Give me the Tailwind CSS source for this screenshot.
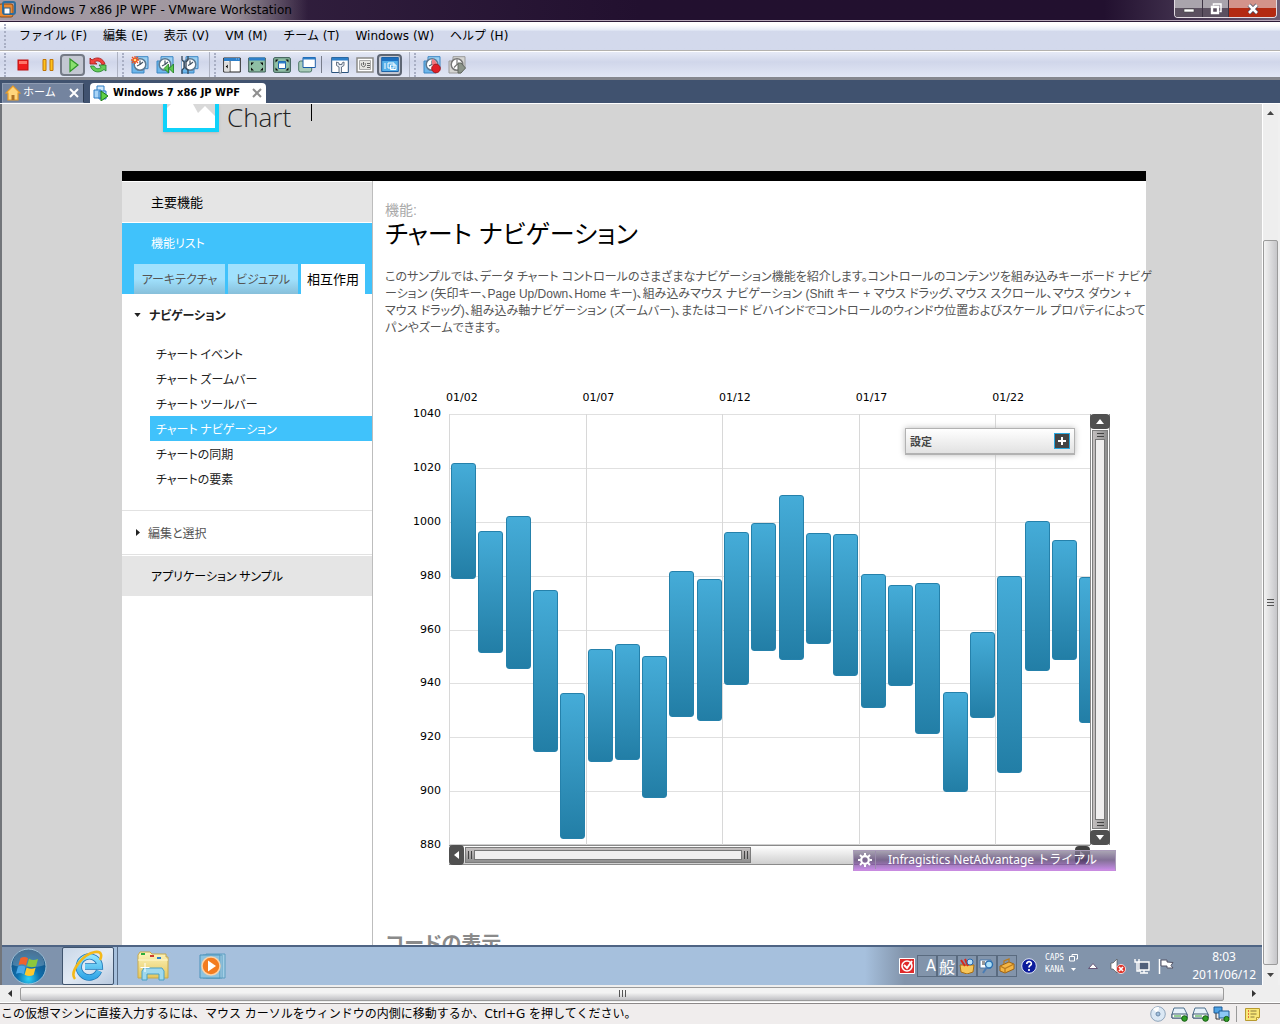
<!DOCTYPE html>
<html lang="ja">
<head>
<meta charset="utf-8">
<title>Windows 7 x86 JP WPF - VMware Workstation</title>
<script src="https://cdn.jsdelivr.net/npm/@tailwindcss/browser@4"></script>
</head>
<body class="h-screen flex flex-col overflow-hidden bg-[#f0eded] text-black text-xs font-['DejaVu_Sans','Noto_Sans_CJK_JP',sans-serif]">

<!-- Shared icon parts -->
<svg class="absolute w-0 h-0" aria-hidden="true">
  <defs>
    <radialGradient id="orb" cx=".5" cy=".85" r=".8"><stop offset="0" stop-color="#2fd4f8"/><stop offset=".4" stop-color="#0d6fae"/><stop offset="1" stop-color="#174a76"/></radialGradient>
    <linearGradient id="ie" x1="0" y1="0" x2="0" y2="1"><stop offset="0" stop-color="#8fe4fc"/><stop offset="1" stop-color="#35a8e8"/></linearGradient>
    <linearGradient id="fold" x1="0" y1="0" x2="0" y2="1"><stop offset="0" stop-color="#fdf6c0"/><stop offset="1" stop-color="#e5c65c"/></linearGradient>
    <symbol id="clock" viewBox="0 0 18 18"><path d="M5 .7h12v12H5z" fill="#9bd0f3" stroke="#3a86c4"/><path d="M1 5h12v12H1z" fill="#6db6ea" stroke="#3a86c4"/><circle cx="9" cy="8.500" r="5.800" fill="#fff" stroke="#5c7890" stroke-width="1.500"/><path d="M9 4.500v4l-3 1.500M9 8.500l3-2.500" fill="none" stroke="#456" stroke-width="1.200"/></symbol>
    <symbol id="clockg" viewBox="0 0 18 18"><path d="M5 .7h12v12H5zM1 5h12v12H1z" fill="#d5d5d3" stroke="#999"/><circle cx="9" cy="8.500" r="5.800" fill="#fff" stroke="#777" stroke-width="1.500"/><path d="M9 3.500v5l-3 3M9 8.500h3" fill="none" stroke="#777" stroke-width="1.200"/></symbol>
    <symbol id="drive" viewBox="0 0 17 16"><path d="M3 2h10l3 6v4H1V8z" fill="#e7f2fa" stroke="#4d6f8c"/><path d="M1 8h15v4H1z" fill="#fff" stroke="#36546e"/><path d="M3 10h7" stroke="#2ca02c"/><circle cx="13.500" cy="12.500" r="2.800" fill="#2f9e26" stroke="#145c10"/></symbol>
  </defs>
</svg>

<header class="shrink-0">
  <!-- Title bar -->
  <div class="h-[21px] flex items-start justify-between bg-linear-to-r from-[#3c2a48] via-[#22102f] via-50% to-[#22102f] border-b border-[#b8a9ba]">
    <div class="flex items-center h-5 pr-4 bg-linear-to-r from-[#a39aa4] via-[#a0979f] via-75% to-[#3c2a48]/0 whitespace-nowrap">
      <svg class="w-[17px] h-[18px] mr-1" viewBox="0 0 17 18"><rect x="-1" y="3" width="14" height="13" rx="2" fill="#e98a33" stroke="#8c4b15"/><rect x="3" y="1" width="12" height="12" rx="2" fill="none" stroke="#2f6d9c" stroke-width="2"/><rect x="4" y="7" width="6" height="6" fill="#fff" stroke="#2b5f8a"/></svg>
      <h1 class="text-xs">Windows 7 x86 JP WPF - VMware Workstation</h1>
    </div>
    <div class="h-5 pl-[70px] pr-[3px] bg-linear-to-r from-[#22102f] to-[#6b5d75] shrink-0">
      <div class="flex h-[18px] rounded-b border border-t-0 border-[#e2dbe2] overflow-hidden">
        <button aria-label="Minimize" class="w-7 flex items-center justify-center bg-linear-to-b from-[#a9a4ac] from-50% to-[#5b5060] to-50% border-r border-[#3c3343]"><svg class="w-3 h-3" viewBox="0 0 12 12"><path d="M1 6h10v3H1z" fill="#fff" stroke="#444" stroke-width=".6"/></svg></button>
        <button aria-label="Restore" class="w-[26px] flex items-center justify-center bg-linear-to-b from-[#a9a4ac] from-50% to-[#5b5060] to-50% border-r border-[#3c3343]"><svg class="w-3 h-3" viewBox="0 0 12 12"><path d="M3.500 2.500V1h7.500v7.500H9.500" fill="none" stroke="#fff" stroke-width="1.500"/><path d="M2 4h6v6H2z" fill="none" stroke="#fff" stroke-width="2.400"/></svg></button>
        <button aria-label="Close" class="w-[47px] flex items-center justify-center bg-linear-to-b from-[#d3938a] from-50% to-[#b32a12] to-50%"><svg class="w-3 h-3" viewBox="0 0 12 12"><path d="M2 2l8 8M10 2l-8 8" stroke="#444a60" stroke-width="4"/><path d="M2 2l8 8M10 2l-8 8" stroke="#fff" stroke-width="2.600"/></svg></button>
      </div>
    </div>
  </div>
  <!-- Menu -->
  <nav class="h-[30px] flex items-center gap-4 pl-1 bg-linear-to-b from-white from-10% via-[#e4eaf6] via-30% to-[#d3d9ec] to-31% border-t border-t-[#2a1a36] border-b border-b-[#b4b2ae] whitespace-nowrap">
    <span class="w-0 h-6 border-l-2 border-dotted border-[#a9afc4] -mr-[3px]"></span>
    <a href="#">ファイル (F)</a><a href="#">編集 (E)</a><a href="#">表示 (V)</a><a href="#">VM (M)</a><a href="#">チーム (T)</a><a href="#">Windows (W)</a><a href="#">ヘルプ (H)</a>
  </nav>
  <!-- Toolbar -->
  <div class="h-[29px] flex items-center bg-linear-to-b from-[#e6eaf6] via-[#d0d6ea] via-40% to-[#e2e7f5] border-t border-white border-b-3 border-b-[#85878e]">
    <span class="w-1 h-full"></span><span class="w-[6px] h-6 border-l-2 border-dotted border-[#a9afc4]"></span>
    <button aria-label="Power off" class="w-[25px] h-6 flex items-center justify-center"><svg class="w-[18px] h-[18px]" viewBox="0 0 18 18"><rect x="4" y="4" width="10" height="10" fill="#f01c1c" stroke="#b11"/><path d="M5 5h8v3H5z" fill="#ff7468"/></svg></button>
    <button aria-label="Suspend" class="w-[25px] h-6 flex items-center justify-center"><svg class="w-[18px] h-[18px]" viewBox="0 0 18 18"><path d="M4 3.500h3v11H4zM11 3.500h3v11h-3z" fill="#ffc21c" stroke="#c07405"/></svg></button>
    <button aria-label="Power on" class="w-[25px] h-[22px] flex items-center justify-center rounded border-2 border-[#747a86] bg-[#c3c7d2]"><svg class="w-[18px] h-[18px]" viewBox="0 0 18 18"><path d="M6 3l8 6-8 6.500z" fill="#8ae06e" stroke="#2f9428" stroke-width="1.200"/></svg></button>
    <button aria-label="Reset" class="w-[25px] h-6 flex items-center justify-center"><svg class="w-[18px] h-[18px]" viewBox="0 0 18 18"><path d="M1 8V2l2 2c5-4 11-2 13 4l-3 1C12 5 8 4 5.500 6L8 8z" fill="#f0413c" stroke="#a51414" stroke-width=".8"/><path d="M17 9v6l-2-1.500C10 18 3 16 1.500 10H5c1.500 3 4.500 3.500 7 1.500L10 9z" fill="#64cc58" stroke="#21812a" stroke-width=".8"/></svg></button>
    <span class="w-2 h-full border-r border-[#aeb3c3]"></span><span class="w-[9px] h-6 flex justify-center"><i class="w-0 border-l-2 border-dotted border-[#a9afc4]"></i></span>
    <button aria-label="Take snapshot" class="w-[25px] h-6 flex items-center justify-center"><svg class="w-[18px] h-[18px]" viewBox="0 0 18 18"><use href="#clock"/><path d="M4 0v8M0 4h8M1 1l6 6M7 1L1 7" stroke="#f0501c" stroke-width="1.300"/><circle cx="4" cy="4" r="1.300" fill="#ffe27a"/></svg></button>
    <button aria-label="Revert snapshot" class="w-[25px] h-6 flex items-center justify-center"><svg class="w-[18px] h-[18px]" viewBox="0 0 18 18"><use href="#clock"/><path d="M12.500 8v9L8 12.500zM17.500 8v9L13 12.500z" fill="#5cc850" stroke="#1c7c1c" stroke-width=".8"/></svg></button>
    <button aria-label="Manage snapshots" class="w-[25px] h-6 flex items-center justify-center"><svg class="w-[18px] h-[18px]" viewBox="0 0 18 18"><use href="#clock"/><path d="M1 0v4l2 2v6l-2 2v4M7 0v4L5 6v6l2 2v4" fill="#f5f7fa" stroke="#34465a" stroke-width="1.300"/></svg></button>
    <span class="w-2 h-full border-r border-[#aeb3c3]"></span><span class="w-[9px] h-6 flex justify-center"><i class="w-0 border-l-2 border-dotted border-[#a9afc4]"></i></span>
    <button aria-label="Sidebar" class="w-[25px] h-6 flex items-center justify-center"><svg class="w-[18px] h-[18px]" viewBox="0 0 18 18"><path d="M.7 2h16.600v14H.7z" fill="#fff" stroke="#222"/><path d="M1 2h16v3H1z" fill="#2d7fc9"/><path d="M7 5v11" stroke="#333"/><path d="M1.500 5.500h5v10h-5z" fill="#dcdcdc"/><path d="M5 8v5L2.500 10.500zM13 3h1M15 3h1" fill="#000" stroke="#fff" stroke-width=".5"/></svg></button>
    <button aria-label="Fit guest" class="w-[25px] h-6 flex items-center justify-center"><svg class="w-[18px] h-[18px]" viewBox="0 0 18 18"><path d="M.7 2h16.600v14H.7z" fill="#8fbfa5" stroke="#3a5a52"/><path d="M1 1.500h16v3H1z" fill="#2d7fc9"/><path d="M3 6.500h3l-3 3zM15 6.500h-3l3 3zM3 14.500h3l-3-3zM15 14.500h-3l3-3z" fill="#0a0a0a"/></svg></button>
    <button aria-label="Full screen" class="w-[25px] h-6 flex items-center justify-center"><svg class="w-[18px] h-[18px]" viewBox="0 0 18 18"><rect x=".7" y="1.700" width="16.600" height="14.600" rx="1" fill="#8fbfa5" stroke="#2d5148"/><path d="M2.500 3.500h3l-3 3zM15.500 3.500h-3l3 3zM2.500 14.500h3l-3-3zM15.500 14.500h-3l3-3z" fill="#0a0a0a"/><path d="M5.500 5.500h7v7h-7z" fill="#fff" stroke="#1f64aa"/><path d="M5.500 5.500h7v2h-7z" fill="#2d7fc9"/></svg></button>
    <button aria-label="Unity" class="w-[25px] h-6 flex items-center justify-center"><svg class="w-[18px] h-[18px]" viewBox="0 0 18 18"><rect x=".7" y="5" width="13" height="11" rx="2" fill="#a9cdb9" stroke="#4d7767"/><path d="M5 1.500h12.300v10H5z" fill="#fff" stroke="#1d5ea8"/><path d="M5 1.500h12.300v2H5z" fill="#2d7fc9"/></svg></button>
    <span class="w-2 h-full py-1 flex justify-center"><i class="w-px bg-[#777c8a] -ml-1"></i></span>
    <button aria-label="Settings" class="w-[25px] h-6 flex items-center justify-center"><svg class="w-[18px] h-[18px]" viewBox="0 0 18 18"><path d="M.7 1.500h16.600v15H.7z" fill="#fff" stroke="#28527c"/><path d="M1 1.500h16v3H1z" fill="#2d7fc9"/><path d="M5.500 6v3.500L8 11v6h2.500v-6L13 9.500V6l-2 1v1.500H8V7z" fill="#e6ebf2" stroke="#5a6a7c" stroke-width=".9"/></svg></button>
    <button aria-label="Summary" class="w-[25px] h-6 flex items-center justify-center"><svg class="w-[18px] h-[18px]" viewBox="0 0 18 18"><path d="M1 2h16v14H1z" fill="#fff" stroke="#8b8b88" stroke-width="1.500"/><path d="M3.500 4.500h11v9h-11z" fill="#e4e4e0" stroke="#aaa"/><path d="M6 7c-2 3 2 5 3 3s0-3 0-3M7.500 6v3M11 7.500h3M11 9.500h3M11 11.500h3" fill="none" stroke="#666"/></svg></button>
    <button aria-label="Console view" class="w-[25px] h-[22px] flex items-center justify-center rounded border-2 border-[#5e6674] bg-[#c3c7d2]"><svg class="w-[18px] h-[18px]" viewBox="0 0 18 18"><path d="M.7 1.500h16.600v14H.7z" fill="#55b0ea" stroke="#1d62a6"/><path d="M1 2h16v3H1z" fill="#1c6fc0"/><path d="M7 7h6v5H7zM9.500 9H15v4.500H9.500z" fill="#55b0ea" stroke="#fff"/><path d="M3 8h2M3 10h2M3 12h2" stroke="#fff"/></svg></button>
    <span class="w-2 h-full border-r border-[#aeb3c3]"></span><span class="w-[9px] h-6 flex justify-center"><i class="w-0 border-l-2 border-dotted border-[#a9afc4]"></i></span>
    <button aria-label="Record" class="w-[25px] h-6 flex items-center justify-center"><svg class="w-[18px] h-[18px]" viewBox="0 0 18 18"><use href="#clock"/><path d="M9 3a6 6 0 015 7L9 8.500z" fill="#f07a80"/><circle cx="13" cy="12.500" r="4.300" fill="#e11f26" stroke="#a3191c"/></svg></button>
    <button aria-label="Replay" class="w-[25px] h-6 flex items-center justify-center"><svg class="w-[18px] h-[18px]" viewBox="0 0 18 18"><use href="#clockg"/><path d="M10 7h3l4.500 5-4.500 5h-3z" fill="#8c948a" stroke="#60665f"/></svg></button>
  </div>
  <!-- Tabs -->
  <div class="h-6 flex items-end gap-[6px] bg-[#40526f] pl-[2px] border-b border-white whitespace-nowrap">
    <a href="#" class="h-5 w-[82px] flex items-center pl-[2px] pr-1 text-white bg-[#74849f] border border-[#8f9cb2] border-r-[#2a384e]">
      <svg class="w-4 h-4 mr-[2px] shrink-0" viewBox="0 0 16 16"><path d="M8 1L1 8h2v7h10V8h2z" fill="#ffd57c" stroke="#e89b26" stroke-width="1.200"/><path d="M6.500 10h3v5h-3z" fill="#b07325"/></svg>
      <span class="text-[11px]">ホーム</span><span class="ml-auto"><svg class="w-[10px] h-[10px]" viewBox="0 0 10 10"><path d="M1 1l8 8M9 1L1 9" stroke="#fff" stroke-width="2"/></svg></span>
    </a>
    <a href="#" class="h-5 w-[176px] flex items-center pl-[3px] pr-1 bg-white rounded-t-sm font-bold font-['DejaVu_Sans_Condensed','DejaVu_Sans',sans-serif]">
      <svg class="w-4 h-4 mr-1 shrink-0" viewBox="0 0 16 16"><path d="M4 1h7v7H4z" fill="#cfe8fb" stroke="#2c7cc4"/><path d="M1 5h7v8H1zM6 6h7v8H6z" fill="#a9d5f7" stroke="#2c7cc4"/><path d="M8 6l7 5-7 5z" fill="#5fd146" stroke="#1f7a1a"/></svg>
      <span class="text-[11px]">Windows 7 x86 JP WPF</span><span class="ml-auto"><svg class="w-[10px] h-[10px]" viewBox="0 0 10 10"><path d="M1 1l8 8M9 1L1 9" stroke="#8f8f8f" stroke-width="2"/></svg></span>
    </a>
  </div>
</header>

<!-- Guest display -->
<section class="flex-1 min-h-0 flex border-x-2 border-l-[#72757a] border-r-[#f0f0f0]">
  <div class="flex-1 min-w-0 flex flex-col">
    <main class="flex-1 min-h-0 overflow-hidden bg-[#d4d4d4] pl-1 text-[#222]">
      <div class="w-[1024px] mx-auto [font-feature-settings:'palt','kern']">
        <div class="h-[67px] flex items-start pl-[41px]">
          <div class="w-14 h-7 bg-white border-4 border-t-0 border-[#0fd2fa] shadow"><svg class="w-full h-3" viewBox="0 0 48 12" preserveAspectRatio="none"><path d="M0 0h4L0 4zM26 0h22v12L38 2l-7 7z" fill="#d9d9d9"/></svg></div>
          <span class="ml-2 -mt-[5px] text-[26px] leading-9 text-[#222] font-light font-['Open_Sans',sans-serif]">Chart</span>
          <i class="ml-5 w-px h-[17px] bg-black"></i>
        </div>
        <div class="h-[10px] bg-black"></div>
        <div class="flex bg-white">
          <aside class="w-[251px] shrink-0 border-r border-[#bdbdbd] pt-px text-xs whitespace-nowrap font-['Noto_Sans_CJK_JP',sans-serif]">
            <a href="#" class="h-[41px] flex items-center pl-[29px] bg-[#e5e5e5] border-b border-white text-[13px] text-black">主要機能</a>
            <div class="bg-[#40c2fb] h-[71px] flex flex-col justify-between">
              <a href="#" class="h-10 flex items-center pl-[29px] text-white">機能リスト</a>
              <div class="flex gap-[3px] pl-3 text-[#555]">
                <a href="#" class="w-[91px] h-[30px] flex items-center justify-center bg-linear-to-b from-[#a0e1fd] from-50% to-[#87bfda]">アーキテクチャ</a>
                <a href="#" class="w-[70px] h-[30px] flex items-center justify-center bg-linear-to-b from-[#a0e1fd] from-50% to-[#87bfda]">ビジュアル</a>
                <a href="#" class="w-16 h-[30px] flex items-center justify-center bg-white text-[13px] text-black">相互作用</a>
              </div>
            </div>
            <a href="#" class="h-[42px] flex items-center gap-2 pl-3 font-bold"><svg class="w-[7px] h-1" viewBox="0 0 8 5"><path d="M0 0h8L4 5z" fill="#222"/></svg>ナビゲーション</a>
            <ul class="pl-7 pt-[5px] pb-[19px] leading-[25px]">
              <li class="pl-[6px]"><a href="#">チャート イベント</a></li>
              <li class="pl-[6px]"><a href="#">チャート ズームバー</a></li>
              <li class="pl-[6px]"><a href="#">チャート ツールバー</a></li>
              <li class="pl-[6px] bg-[#40c2fb] text-white"><a href="#">チャート ナビゲーション</a></li>
              <li class="pl-[6px]"><a href="#">チャートの同期</a></li>
              <li class="pl-[6px]"><a href="#">チャートの要素</a></li>
            </ul>
            <a href="#" class="h-[45px] flex items-center gap-2 pl-[14px] border-y border-[#e2e2e2] text-[#555]"><svg class="w-1 h-[7px]" viewBox="0 0 4 7"><path d="M0 0l4 3.500L0 7z" fill="#222"/></svg>編集と選択</a>
            <a href="#" class="mt-px h-10 flex items-center pl-[29px] bg-[#e5e5e5] text-black">アプリケーション サンプル</a>
          </aside>

          <article class="flex-1 min-w-0 pl-3 pt-5 font-['Liberation_Sans','Noto_Sans_CJK_JP',sans-serif] whitespace-nowrap">
            <p class="text-sm leading-[18px] text-[#aaa]">機能:</p>
            <h2 class="text-[25px] leading-[30px] text-black">チャート ナビゲーション</h2>
            <p class="mt-5 text-xs leading-[17px] text-[#555]">このサンプルでは、データ チャート コントロールのさまざまなナビゲーション機能を紹介します。コントロールのコンテンツを組み込みキーボード ナビゲ<br>ーション (矢印キー、Page Up/Down、Home キー)、組み込みマウス ナビゲーション (Shift キー + マウス ドラッグ、マウス スクロール、マウス ダウン +<br>マウス ドラッグ)、組み込み軸ナビゲーション (ズームバー)、またはコード ビハインドでコントロールのウィンドウ位置およびスケール プロパティによって<br>パンやズームできます。</p>

            <figure class="mt-[54px] mr-9 grid grid-cols-[64px_1fr_20px] text-[11px] leading-[14px] text-black font-['DejaVu_Sans',sans-serif]">
              <div id="dates" class="col-start-2 relative h-[23px]"></div>
              <div id="levels" class="col-start-1 row-start-2 relative"></div>
              <div class="row-start-2 relative h-[431px] border-l border-t border-b border-[#cfcfcf]">
                <div id="plot" class="absolute -inset-px right-0 overflow-hidden"></div>
                <div class="absolute top-[13px] right-[15px] w-[170px] h-[27px] flex items-center justify-between px-1 border border-b-2 border-[#b2b2b2] bg-linear-to-b from-white to-[#e2e2e2] shadow-[0_0_6px_#bbb] font-bold text-[#444] font-['Noto_Sans_CJK_JP',sans-serif]">設定
                  <button aria-label="設定を開く" class="w-4 h-4 bg-[#444] border border-[#29a8e0] flex items-center justify-center"><svg class="w-[10px] h-[10px]" viewBox="0 0 10 10"><path d="M5 1v8M1 5h8" stroke="#fff" stroke-width="2"/></svg></button>
                </div>
              </div>
              <!-- Vertical zoom bar -->
              <div class="row-start-2 flex flex-col border-x border-[#8a8a8a] bg-white">
                <button aria-label="上へ" class="h-[15px] -mx-px rounded bg-[#505050] flex items-center justify-center"><svg class="w-2 h-[5px]" viewBox="0 0 8 5"><path d="M4 0l4 5H0z" fill="#fff"/></svg></button>
                <div class="flex-1 my-px mx-px flex flex-col items-center justify-between border border-[#7c7c7c] bg-linear-to-r from-[#c4c0c0] to-[#8f8f8f]">
                  <i class="w-[7px] h-1 my-[2px] border-y border-[#444]"></i><i class="w-[10px] flex-1 border border-[#777] bg-[#f0efef]"></i><i class="w-[7px] h-1 my-[2px] border-y border-[#444]"></i>
                </div>
                <button aria-label="下へ" class="h-[15px] -mx-px rounded bg-[#505050] flex items-center justify-center"><svg class="w-2 h-[5px]" viewBox="0 0 8 5"><path d="M0 0h8L4 5z" fill="#fff"/></svg></button>
              </div>
              <!-- Horizontal zoom bar -->
              <div class="col-start-2 row-start-3 h-5 flex border-y border-[#8a8a8a] bg-linear-to-b from-white to-[#cfcfcf]">
                <button aria-label="左へ" class="w-[15px] -my-px rounded bg-[#505050] flex items-center justify-center"><svg class="w-[5px] h-2" viewBox="0 0 5 8"><path d="M5 0v8L0 4z" fill="#fff"/></svg></button>
                <div class="w-[286px] my-px ml-px flex items-center border border-[#7c7c7c] bg-linear-to-b from-[#c4c0c0] to-[#8f8f8f]">
                  <i class="w-1 h-2 mx-[2px] border-x border-[#444]"></i><i class="flex-1 h-[10px] border border-[#777] bg-[#f0efef]"></i><i class="w-1 h-2 mx-[2px] border-x border-[#444]"></i>
                </div>
                <div class="ml-auto relative">
                  <button aria-label="右へ" class="w-[15px] h-full rounded bg-[#404040] flex items-center justify-center"><svg class="w-[5px] h-2" viewBox="0 0 5 8"><path d="M0 0v8l5-4z" fill="#fff"/></svg></button>
                  <div class="absolute top-1 -right-[26px] w-[263px] h-[21px] flex items-center border border-[#a99bb8] border-b-2 border-b-[#c88be0] bg-linear-to-b from-[#8d869a]/75 via-[#5a4174]/75 via-50% to-[#b06ad8]/80 text-white text-xs font-['Noto_Sans','Noto_Sans_CJK_JP',sans-serif] [font-feature-settings:normal]">
                    <span class="w-[22px] h-full flex items-center justify-center border-r border-[#9c8cae]"><svg class="w-[14px] h-[14px]" viewBox="0 0 14 14"><circle cx="7" cy="7" r="3.800" fill="none" stroke="#fff" stroke-width="2.200"/><path d="M7 0v2.500M7 11.500V14M0 7h2.500M11.500 7H14M2 2l1.900 1.900M10.100 10.100L12 12M12 2l-1.900 1.900M3.900 10.100L2 12" stroke="#fff" stroke-width="2"/></svg></span>
                    <span class="ml-3">Infragistics NetAdvantage トライアル</span>
                  </div>
                </div>
              </div>
            </figure>
            <h3 class="mt-[65px] text-xl leading-7 font-bold text-[#8a8a8a] pb-10">コードの表示</h3>
          </article>
        </div>
      </div>
    </main>

    <!-- Guest taskbar -->
    <footer class="h-10 shrink-0 flex items-center border-t-2 border-[#4e6484] bg-linear-to-r from-[#7f93ad] from-5% via-[#a6c0dd] via-9% to-[#a6c0dd] whitespace-nowrap">
      <button aria-label="スタート" class="ml-2 w-[37px] h-[37px]"><svg viewBox="0 0 37 37"><circle cx="18.500" cy="18.500" r="17.500" fill="url(#orb)" stroke="#9cc0d8"/><path d="M2.500 17a16 16 0 0132 0c-8 3-24 3-32 0z" fill="#fff" opacity=".22"/><path d="M10.500 10c3-1.500 5-1.500 7.500.3L16 17.500c-2.500-1.500-5-1.500-7.500-.4z" fill="#f0622d"/><path d="M19 10.800c3 1.600 5.500 1.600 9 .2l-2 7.200c-3 1.300-6 1.300-9-.2z" fill="#8cc83c"/><path d="M8 18.600c3-1.200 5-1 7.600.4l-2 7.200c-2.600-1.600-5-1.600-7.600-.4z" fill="#4aa8e8"/><path d="M16.600 19.500c3 1.500 6 1.500 9 .3l-2 7.200c-3 1.300-6 1.300-9-.3z" fill="#fdc82e"/></svg></button>
      <button aria-label="Internet Explorer" class="ml-[15px] w-[52px] h-[38px] flex items-center justify-center rounded-xs border border-[#3f546e] bg-linear-to-br from-[#c9d7e8] via-[#e2eaf4] to-[#b9cadf]"><svg class="w-[34px] h-8" viewBox="0 0 34 32"><path d="M28 21a10.500 10.500 0 11.800-4.500H14" fill="none" stroke="#1f78b8" stroke-width="6.400"/><path d="M28 21a10.500 10.500 0 11.800-4.500H14" fill="none" stroke="url(#ie)" stroke-width="4.800"/><path d="M4 29C-2 22 12 4 24 2c7-1 7 4 5 8" fill="none" stroke="#f4b91a" stroke-width="2.600"/></svg></button>
      <i class="w-1 h-[38px] border-r border-[#566b86]"></i>
      <button aria-label="エクスプローラー" class="ml-[18px] w-[34px] h-[34px]"><svg viewBox="0 0 34 34"><path d="M2 6l2-3h10l2 2h14v3h2v21H2z" fill="url(#fold)" stroke="#c9a94a"/><path d="M5 4h4v2H5z" fill="#2cae3c"/><path d="M14 6h4v2h-4z" fill="#cf3b2f"/><path d="M21 8h4v2h-4z" fill="#2f80cc"/><path d="M2 11h30" stroke="#fff8cf"/><path d="M6 31v-9l2-3h18l2 3v9h-5v-6H11v6z" fill="#9fd9ee" stroke="#4ba0c4"/><path d="M9 14v9M4.500 18.500h9" stroke="#fff"/></svg></button>
      <button aria-label="メディア プレーヤー" class="ml-7 w-[34px] h-[34px]"><svg viewBox="0 0 34 34"><path d="M8 5h19v24H8z" fill="#a3cfe6" stroke="#5c9dc0"/><path d="M5 6h19v23H5z" fill="#b9dcee" stroke="#5c9dc0"/><path d="M2 6h20v23H2z" fill="#8cc3e0" stroke="#4d93ba"/><circle cx="13" cy="17" r="9" fill="#f37c20" stroke="#fbd2a8" stroke-width="1.500"/><path d="M10 11.500v11l8-5.500z" fill="#fff"/></svg></button>
      <div class="ml-auto h-full pl-[34px] pr-[6px] flex items-center bg-linear-to-r from-[#a6c0dd] to-[#8294ab] to-10% text-white">
        <svg class="w-4 h-4" viewBox="0 0 16 16"><path d="M.5.500h15v15H.5z" fill="#e02a2a" stroke="#fff"/><circle cx="8" cy="8" r="5" fill="none" stroke="#fff" stroke-width="1.600"/><path d="M5 7l3 3 5-7" fill="none" stroke="#fff" stroke-width="2"/></svg>
        <div class="ml-[2px] flex">
          <button class="w-5 h-[22px] border border-[#5a6b80] text-base leading-5 text-right font-['Liberation_Sans_Narrow','DejaVu_Sans_Condensed',sans-serif]">A</button>
          <button class="w-5 h-[22px] border border-[#5a6b80] text-base leading-5 font-['Noto_Sans_CJK_JP',sans-serif]">般</button>
          <button aria-label="IMEパッド" class="w-5 h-[22px] border border-[#5a6b80] flex items-center justify-center"><svg class="w-4 h-4" viewBox="0 0 16 16"><path d="M1 7h14l-1 7-6 2-6-2z" fill="#f6c65a" stroke="#a86e14"/><path d="M2 2l4 6M6 1l3 7" stroke="#d6281f" stroke-width="2"/><circle cx="11" cy="4" r="3" fill="#b8e0f8" stroke="#2768b0"/></svg></button>
          <button aria-label="辞書" class="w-5 h-[22px] border border-[#5a6b80] flex items-center justify-center"><svg class="w-4 h-4" viewBox="0 0 16 16"><path d="M1 2h11v8H1z" fill="#fff" stroke="#4c79a8"/><path d="M3 4h3M3 6h3" stroke="#333"/><circle cx="10" cy="6.500" r="3.500" fill="#aee0f8" stroke="#2b6fb0" stroke-width="1.400"/><path d="M8 9l-4 6" stroke="#4a7cb4" stroke-width="2"/></svg></button>
          <button aria-label="ツール" class="w-5 h-[22px] border border-[#5a6b80] flex items-center justify-center"><svg class="w-4 h-4" viewBox="0 0 16 16"><path d="M1 8l9-4 5 2v5l-9 4-5-2z" fill="#f4b544" stroke="#9c6316"/><path d="M1 8l5 2.500 9-4.500M6 10v5M5 6V3l5-2v3" fill="none" stroke="#b87a1e" stroke-width="1.300"/></svg></button>
        </div>
        <svg class="ml-1 w-4 h-4" viewBox="0 0 16 16"><circle cx="8" cy="8" r="7.300" fill="#0c1c9c" stroke="#dfe6f5"/><path d="M5.800 6c0-3.500 5-3 4.500 0C10 7.500 8 7.500 8 9.500M8 11v2" fill="none" stroke="#fff" stroke-width="1.700"/></svg>
        <div class="ml-2 text-[8px] leading-3 font-['DejaVu_Sans_Mono',monospace] -mt-1"><p>CAPS</p><p>KANA</p></div>
        <svg class="ml-[5px] -mt-1 w-[9px] h-5" viewBox="0 0 9 20"><path d="M3 2V.5h5.500V5H7M.5 2.500h5V7h-5z" fill="none" stroke="#fff"/><path d="M2 14h5l-2.500 3z" fill="#fff"/></svg>
        <svg class="ml-[10px] w-[10px] h-[6px]" viewBox="0 0 10 6"><path d="M5 .5L9.500 5.500h-9z" fill="#fff" stroke="#657"/></svg>
        <svg class="ml-3 w-4 h-4" viewBox="0 0 16 16"><path d="M1 5h2l4-4v14l-4-4H1z" fill="#fff" stroke="#555" stroke-width=".7"/><circle cx="11" cy="11" r="4.600" fill="#e0352b" stroke="#fff" stroke-width=".7"/><path d="M9 9l4 4M13 9l-4 4" stroke="#fff" stroke-width="1.700"/></svg>
        <svg class="ml-2 w-4 h-4" viewBox="0 0 16 16"><path d="M5 4h10v8H5z" fill="#50607a" stroke="#fff" stroke-width="1.400"/><path d="M10 12v3M6 15h8M1 1v3h4V1M3 4v9h4" fill="none" stroke="#fff" stroke-width="1.400"/></svg>
        <svg class="ml-2 w-4 h-4" viewBox="0 0 16 16"><path d="M1.500 1v15" stroke="#fff" stroke-width="1.500"/><path d="M3 2h6v2l6 .5-2 3 2 2.500H9V8H3z" fill="#fff" stroke="#556"/></svg>
        <div class="ml-[18px] text-center text-xs leading-[18px] font-['Noto_Sans',sans-serif]"><p>8:03</p><p>2011/06/12</p></div>
      </div>
    </footer>
  </div>
  <!-- Display vertical scroll bar -->
  <div class="w-4 shrink-0 flex flex-col items-center bg-[#eeeeee] border-l border-white">
    <svg class="mt-[7px] w-[7px] h-1" viewBox="0 0 7 4"><path d="M3.500 0L7 4H0z" fill="#444"/></svg>
    <div class="mt-[125px] flex-1 w-full flex items-center justify-center border border-[#9b9b9b] rounded-xs bg-linear-to-r from-[#f3f3f3] to-[#c6c6c9]"><i class="w-[7px] h-[7px] border-y border-[#555] flex items-center"><b class="w-full h-px bg-[#555]"></b></i></div>
    <svg class="my-2 w-[7px] h-1" viewBox="0 0 7 4"><path d="M0 0h7L3.500 4z" fill="#444"/></svg>
  </div>
</section>

<!-- Display horizontal scroll bar -->
<div class="h-[18px] shrink-0 flex items-center pl-2 pr-6 bg-[#eeeeee] border-b border-white">
  <svg class="w-1 h-[7px]" viewBox="0 0 4 7"><path d="M4 0v7L0 3.500z" fill="#333"/></svg>
  <div class="ml-2 flex-1 h-[14px] flex items-center justify-center border border-[#9b9b9b] rounded-xs bg-linear-to-b from-[#f3f3f3] from-40% to-[#c0c0c4]"><i class="w-[7px] h-[7px] border-x border-[#555] flex justify-center"><b class="w-px h-full bg-[#555]"></b></i></div>
  <svg class="ml-7 w-1 h-[7px]" viewBox="0 0 4 7"><path d="M0 0v7l4-3.500z" fill="#333"/></svg>
</div>

<!-- Status bar -->
<div class="h-[21px] shrink-0 flex items-center justify-between border-t border-[#8d8989] pl-px pr-5 whitespace-nowrap">
  <p class="text-xs">この仮想マシンに直接入力するには、マウス カーソルをウィンドウの内側に移動するか、Ctrl+G を押してください。</p>
  <div class="flex items-center h-full">
    <svg class="w-4 h-4" viewBox="0 0 16 16"><circle cx="8" cy="8" r="7.300" fill="#dbe8f4" stroke="#8fa5bb"/><path d="M8 8L3 3a7 7 0 016-2z" fill="#fff"/><circle cx="8" cy="8" r="2" fill="#9fc0de" stroke="#6e8aa8"/></svg>
    <svg class="ml-[5px] w-[17px] h-4"><use href="#drive"/></svg>
    <svg class="ml-1 w-[17px] h-4"><use href="#drive"/></svg>
    <svg class="ml-1 w-[17px] h-4" viewBox="0 0 17 16"><path d="M1 1h8v6H1z" fill="#4da2e4" stroke="#1c5a96"/><path d="M3 7v6h4" fill="none" stroke="#333"/><path d="M6 5h10v7H6z" fill="#8cc8f5" stroke="#1c5a96"/><path d="M8 14h6" stroke="#333"/><circle cx="13.500" cy="13" r="2.600" fill="#2f9e26" stroke="#145c10"/></svg>
    <i class="ml-[6px] w-px h-4 bg-[#999]"></i>
    <svg class="ml-2 w-[15px] h-[14px]" viewBox="0 0 15 14"><path d="M.5 1.500h14v9l-3 3H.5z" fill="#f8e878" stroke="#b89a30"/><path d="M3 4h1M3 7h1M3 10h1" stroke="#e0452a" stroke-width="1.500"/><path d="M5.500 4h6M5.500 7h6M5.500 10h4" stroke="#8a7a3a"/><path d="M11.500 13.500v-3h3" fill="#fff8c0" stroke="#b89a30"/></svg>
  </div>
</div>

<script>
  const max = 1040, min = 880, visibleDays = 23.47;
  const ranges = [[1021.8,978.6],[996.5,951.4],[1002.2,945.5],[974.7,914.6],[936.4,882.2],[952.7,910.9],[954.8,911.6],[950.1,897.5],[981.8,927.6],[978.6,926.1],[996.1,939.5],[999.4,952.2],[1009.9,948.8],[995.7,954.8],[995.3,942.9],[980.5,931],[976.7,939.2],[977.1,921.3],[936.9,899.7],[959.1,927.3],[979.7,906.8],[1000.2,944.7],[993.1,948.5],[979.5,925.4]];
  const y = v => (max - v) / (max - min) * 100;
  const x = d => d / visibleDays * 100;
  const plot = document.getElementById('plot');
  const add = (parent, cls, style, text = '') => parent.insertAdjacentHTML('beforeend', `<div class="${cls}" style="${style}">${text}</div>`);
  for (let v = max; v >= min; v -= 20) {
    add(plot, 'absolute inset-x-0 h-px bg-[#e0e0e0]', `top:${y(v)}%`);
    add(document.getElementById('levels'), 'absolute right-[8px] -translate-y-1/2', `top:${y(v)}%`, v);
  }
  ['01/02', '01/07', '01/12', '01/17', '01/22'].forEach((label, i) => {
    add(plot, 'absolute inset-y-0 w-px bg-[#d8d8d8]', `left:${x(i * 5)}%`);
    add(document.getElementById('dates'), 'absolute top-0 -ml-[3px]', `left:${x(i * 5)}%`, label);
  });
  ranges.forEach(([high, low], i) => add(plot, 'absolute w-[25px] ml-[2px] rounded-[3px] border border-[#2581ab] bg-linear-to-b from-[#45acd8] to-[#227ea6]', `left:${x(i)}%;top:${y(high)}%;height:${y(low) - y(high)}%`));
</script>
</body>
</html>
